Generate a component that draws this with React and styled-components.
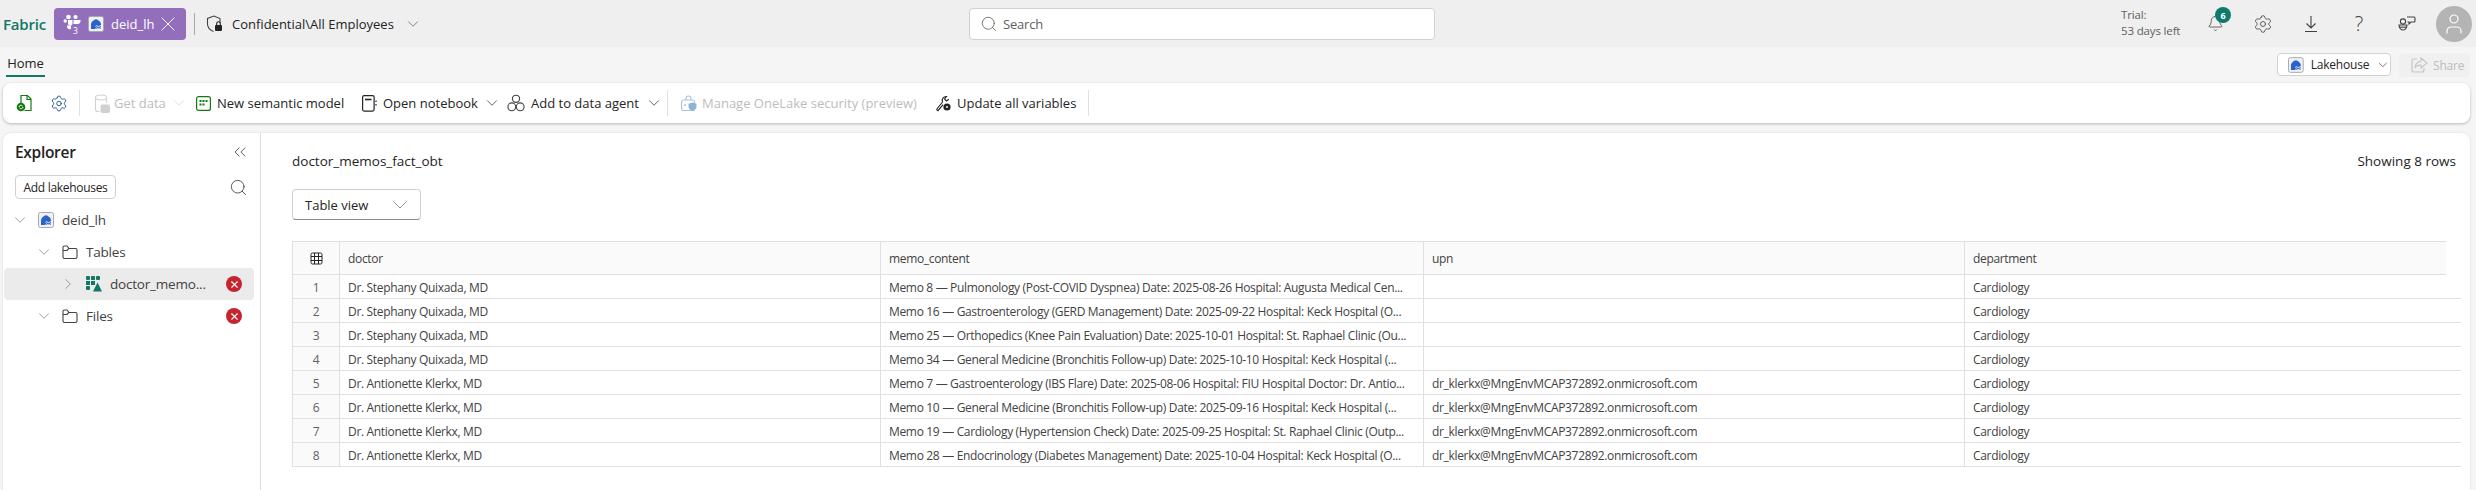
import React from 'react'
import styled, { createGlobalStyle } from 'styled-components'
import { ChevronDown, ChevronRight, ChevronsLeft, X, Search, Settings, User, Bell } from 'lucide-react'

const GlobalStyle = createGlobalStyle`
    html, body {
        margin: 0;
        padding: 0;
        background: #f5f5f5;
        overflow: hidden;
    }
    body {
        font-family: "Open Sans", "Noto Sans", "Liberation Sans", sans-serif;
        color: #242424;
    }
`

const Page = styled.div`
    width: 2476px;
    height: 490px;
    display: flex;
    flex-direction: column;
    overflow: hidden;
`

const TopBar = styled.header`
    height: 47px;
    flex: none;
    background: #efefef;
    display: grid;
    grid-template-columns: 969px 466px 1fr;
    align-items: center;
`

const TopLeft = styled.div`
    display: flex;
    align-items: center;
    padding-left: 3px;
`

const Brand = styled.span`
    font-size: 15px;
    font-weight: 600;
    letter-spacing: -0.2px;
    color: #117865;
    width: 51px;
`

const Chip = styled.div`
    width: 132px;
    height: 32px;
    box-sizing: border-box;
    padding-left: 9px;
    background: #936fbb;
    border-radius: 4px;
    display: flex;
    align-items: center;
    color: #fff;
    font-size: 13px;
`

const ChipLabel = styled.span`
    width: 43px;
    margin: 0 2px 0 7px;
    white-space: nowrap;
`

const ChipTile = styled.span`
    display: flex;
    margin-left: 7px;
`

const Rule = styled.div`
    width: 1px;
    height: ${(p) => p.$height || 22}px;
    background: ${(p) => p.$color || '#a8a8a8'};
    flex: none;
    margin: ${(p) => p.$margin || '0'};
`

const SensitivityText = styled.span`
    width: 165px;
    font-size: 13px;
    margin: 0 7px 0 9px;
    white-space: nowrap;
`

const SearchBox = styled.div`
    height: 32px;
    box-sizing: border-box;
    background: #fff;
    border: 1px solid #d1d1d1;
    border-radius: 4px;
    display: flex;
    align-items: center;
    padding-left: 10px;
    gap: 5px;
    font-size: 13px;
    letter-spacing: -0.2px;
    color: #616161;
`

const TopRight = styled.div`
    display: flex;
    align-items: center;
    justify-content: flex-end;
    padding-right: 4px;
    height: 47px;
`

const Trial = styled.div`
    width: 70px;
    font-size: 11.5px;
    line-height: 16px;
    letter-spacing: -0.15px;
    color: #616161;
    white-space: nowrap;
    margin-bottom: 1px;
`

const TopIcon = styled.div`
    position: relative;
    width: 48px;
    height: 47px;
    display: flex;
    align-items: center;
    justify-content: center;
    color: #424242;
`

const HelpGlyph = styled.span`
    font-size: 20px;
    font-weight: 300;
    line-height: 1;
`

const Badge = styled.span`
    position: absolute;
    left: 24px;
    top: 7px;
    width: 16px;
    height: 16px;
    border-radius: 50%;
    background: #0f7b6c;
    color: #fff;
    font-size: 9px;
    font-weight: 700;
    display: flex;
    align-items: center;
    justify-content: center;
`

const Avatar = styled.div`
    width: 36px;
    height: 36px;
    border-radius: 50%;
    background: #b4b4b4;
    color: #fff;
    display: flex;
    align-items: center;
    justify-content: center;
    margin-left: 5px;
`

const TabRow = styled.div`
    height: 36px;
    box-sizing: border-box;
    flex: none;
    display: flex;
    align-items: flex-start;
    justify-content: space-between;
    padding: 6px 6px 0 6px;
`

const Tab = styled.div`
    width: 39px;
    height: 24px;
    box-sizing: border-box;
    border-bottom: 2px solid #117865;
    font-size: 13px;
    font-weight: 500;
    text-align: center;
    line-height: 20px;
`

const TabActions = styled.div`
    display: flex;
    gap: 8px;
`

const LakehouseButton = styled.div`
    width: 114px;
    height: 23px;
    box-sizing: border-box;
    background: #fff;
    border: 1px solid #d1d1d1;
    border-radius: 4px;
    display: flex;
    align-items: center;
    padding-left: 10px;
    gap: 7px;
    font-size: 12px;
    letter-spacing: -0.2px;
`

const ShareButton = styled.div`
    width: 71px;
    height: 24px;
    box-sizing: border-box;
    background: #f0f0f0;
    border-radius: 4px;
    display: flex;
    align-items: center;
    padding-left: 12px;
    gap: 5px;
    font-size: 12px;
    letter-spacing: -0.2px;
    color: #bdbdbd;
`

const Toolbar = styled.div`
    height: 40px;
    flex: none;
    margin: 0 6px 0 3px;
    background: #fff;
    border-radius: 8px;
    box-shadow: 0 1px 3px rgba(0, 0, 0, 0.25);
    display: flex;
    align-items: center;
    padding-left: 13px;
    font-size: 13px;
`

const ToolIcon = styled.div`
    display: flex;
    width: ${(p) => p.$width || 18}px;
    flex: none;
    align-items: center;
    justify-content: center;
    margin-right: ${(p) => p.$gap ?? 5}px;
`

const ToolLabel = styled.span`
    flex: none;
    width: ${(p) => p.$width}px;
    color: ${(p) => (p.$disabled ? '#bdbdbd' : '#242424')};
    white-space: nowrap;
    margin-right: ${(p) => p.$gap ?? 0}px;
`

const Caret = styled(ChevronDown)`
    flex: none;
    margin-right: ${(p) => p.$gap ?? 0}px;
`

const Body = styled.div`
    flex: 1;
    display: flex;
    margin: 10px 6px 0 3px;
    min-height: 0;
`

const Explorer = styled.aside`
    width: 257px;
    flex: none;
    background: #fff;
    border-radius: 8px 0 0 0;
    border-right: 1px solid #e8e8e8;
    box-shadow: 0 0 2px rgba(0, 0, 0, 0.15);
    padding-top: 8px;
`

const ExplorerHead = styled.div`
    display: flex;
    justify-content: space-between;
    align-items: center;
    padding: 0 10px 0 12px;
    height: 22px;
`

const ExplorerTitle = styled.h2`
    margin: 0;
    font-size: 15.5px;
    font-weight: 600;
    letter-spacing: -0.3px;
`

const ExplorerTools = styled.div`
    display: flex;
    justify-content: space-between;
    align-items: center;
    padding: 0 12px;
    margin: 12px 0 5px;
`

const AddButton = styled.div`
    width: 101px;
    height: 24px;
    box-sizing: border-box;
    border: 1px solid #d1d1d1;
    border-radius: 4px;
    font-size: 12px;
    letter-spacing: -0.3px;
    display: flex;
    align-items: center;
    justify-content: center;
`

const TreeRow = styled.div`
    height: 32px;
    margin-right: 6px;
    margin-left: 1px;
    padding-left: ${(p) => p.$indent}px;
    display: flex;
    align-items: center;
    border-radius: 4px;
    background: ${(p) => (p.$selected ? '#ebebeb' : 'transparent')};
    font-size: 13.5px;
    letter-spacing: -0.2px;
    color: #424242;
    position: relative;
`

const TreeChevron = styled.div`
    width: 18px;
    display: flex;
    color: #8a8a8a;
    margin-right: 9px;
    flex: none;
`

const TreeLabel = styled.span`
    margin-left: 8px;
`

const ErrorDot = styled.span`
    position: absolute;
    left: 222px;
    top: 8px;
    width: 16px;
    height: 16px;
    border-radius: 50%;
    background: #c4262e;
    color: #fff;
    display: flex;
    align-items: center;
    justify-content: center;
`

const Main = styled.main`
    flex: 1;
    background: #fff;
    border-radius: 0 8px 0 0;
    box-shadow: 0 0 2px rgba(0, 0, 0, 0.15);
    padding: 0 9px 0 31px;
    min-width: 0;
`

const MainHead = styled.div`
    display: flex;
    justify-content: space-between;
    align-items: center;
    height: 56px;
    font-size: 13.5px;
    font-weight: 500;
    padding-right: 5px;
    box-sizing: border-box;
`

const ViewSelect = styled.div`
    width: 129px;
    height: 31px;
    box-sizing: border-box;
    border: 1px solid #d1d1d1;
    border-bottom-color: #8a8a8a;
    border-radius: 4px;
    display: flex;
    align-items: center;
    justify-content: space-between;
    padding: 0 8px 0 12px;
    font-size: 13px;
`

const Grid = styled.div`
    margin-top: 21px;
    width: 2169px;
    font-size: 12px;
    letter-spacing: -0.33px;
    color: #424242;
`

const Row = styled.div`
    display: grid;
    grid-template-columns: 48px 541px 543px 541px 1fr;
    height: ${(p) => (p.$head ? 34 : 24)}px;
    width: ${(p) => (p.$head ? '2154px' : '2169px')};
    border-bottom: 1px solid #e0e0e0;
    border-top: ${(p) => (p.$head ? '1px solid #e0e0e0' : 'none')};
    box-sizing: border-box;
    background: ${(p) => (p.$head ? '#fafafa' : '#fff')};

    > * {
        padding-top: ${(p) => (p.$head ? 0 : 2)}px;
    }
`

const Cell = styled.div`
    display: flex;
    align-items: center;
    padding-left: 8px;
    border-right: 1px solid #e0e0e0;
    white-space: nowrap;
    overflow: hidden;
    &:last-child {
        border-right: none;
    }
`

const IndexCell = styled(Cell)`
    justify-content: center;
    padding-left: 0;
    background: #fafafa;
    border-left: 1px solid #e0e0e0;
    color: #616161;
`

const TeamsIcon = () => (
    <svg width="18" height="22" viewBox="0 0 18 22" fill="#fff">
        <circle cx="5.5" cy="4" r="2.3" />
        <circle cx="12.5" cy="4" r="2.1" />
        <circle cx="2.2" cy="8" r="1.7" />
        <path d="M5 7h4.5v3.5a2.2 2.2 0 0 1-4.5 0z" />
        <path d="M10.5 7h7v1a3 3 0 0 1-3 3h-4z" />
        <path d="M4 12.5h4v3.5a3 3 0 0 1-4-2z" />
        <text x="10" y="20.5" fontSize="8.5" fontFamily="Open Sans">3</text>
    </svg>
)

const LakehouseIcon = ({ size = 16 }) => (
    <svg width={size} height={size} viewBox="0 0 16 16">
        <rect x="0.5" y="0.5" width="15" height="15" rx="2" fill="#eef1f7" stroke="#a8a8a8" />
        <path d="M3 13V8.2C3 6 6 3.5 8 3.2 10 3.5 13 6 13 8.2V13z" fill="#2a62c9" />
        <path d="M7.5 10.2q1 -1 2 0t2 0 2 0M7.5 12.4q1 -1 2 0t2 0 2 0" fill="none" stroke="#fff" strokeWidth="1" />
    </svg>
)

const ShieldLockIcon = () => (
    <svg width="17" height="18" viewBox="0 0 17 18" fill="none">
        <path d="M14 8V3.5L8 1 1.5 3.5V9c0 3.5 2.5 6 6 7.5" stroke="#424242" strokeWidth="1.1" />
        <rect x="9" y="10" width="7" height="6" rx="1" fill="#242424" />
        <path d="M10.7 10V8.6a1.8 1.8 0 0 1 3.6 0V10" stroke="#242424" strokeWidth="1.1" />
    </svg>
)

const DownloadIcon = () => (
    <svg width="14" height="18" viewBox="0 0 14 18" fill="none" stroke="#424242" strokeWidth="1.1">
        <path d="M7 1v12M2.5 8.5 7 13l4.5-4.5M1 16.5h12" />
    </svg>
)

const FolderIcon = () => (
    <svg width="16" height="16" viewBox="0 0 16 16" fill="none" stroke="#424242" strokeWidth="1.1">
        <path d="M1 3.5A1.5 1.5 0 0 1 2.5 2H5l2 2.5h6.5A1.5 1.5 0 0 1 15 6v7a1.5 1.5 0 0 1-1.5 1.5h-11A1.5 1.5 0 0 1 1 13z" />
        <path d="M7 4.5 5 6.5H1" />
    </svg>
)

const DeltaTableIcon = () => (
    <svg width="16" height="16" viewBox="0 0 16 16" fill="#117865">
        <rect x="0" y="0" width="4" height="4" rx="1" />
        <rect x="5" y="0" width="4" height="4" rx="0.5" />
        <rect x="10" y="0" width="4" height="4" rx="1" />
        <rect x="0" y="5" width="4" height="4" />
        <rect x="5" y="5" width="4" height="4" />
        <rect x="0" y="10" width="4" height="4" rx="1" />
        <path d="M11.5 6.5 16 15.5H7z" />
    </svg>
)

const GridIcon = () => (
    <svg width="13" height="13" viewBox="0 0 13 13" fill="none" stroke="#242424" strokeWidth="1">
        <rect x="1" y="1" width="11" height="11" rx="1.5" />
        <path d="M4.5 1v11M8.5 1v11M1 4.5h11M1 8.5h11" />
    </svg>
)

const RunIcon = () => (
    <svg width="18" height="18" viewBox="0 0 18 18" fill="none">
        <path d="M5 9V1.5h6.5l3.5 3.5v11.5H8.5" stroke="#107c10" strokeWidth="1.2" />
        <path d="M11 1.5V5.5h4" stroke="#107c10" strokeWidth="1.2" />
        <circle cx="5" cy="13" r="4.3" fill="#107c10" />
        <path d="M3 13a2 2 0 0 1 3.5-1M7 13a2 2 0 0 1-3.5 1" stroke="#fff" strokeWidth="1" />
    </svg>
)

const GetDataIcon = () => (
    <svg width="16" height="19" viewBox="0 0 16 19" fill="none" stroke="#d1d1d1" strokeWidth="1.1">
        <ellipse cx="7" cy="3.5" rx="5.5" ry="2.5" />
        <path d="M1.5 3.5v12c0 1 1 2 3 2h1M12.5 3.5v5" />
        <rect x="7" y="11" width="8.5" height="7.5" rx="1.5" fill="#d1d1d1" />
    </svg>
)

const ModelIcon = () => (
    <svg width="15" height="15" viewBox="0 0 15 15" fill="none">
        <rect x="0.6" y="0.6" width="13.8" height="13.8" rx="2" stroke="#107c10" strokeWidth="1.2" />
        <g fill="#107c10">
            <rect x="3.5" y="4" width="2" height="2" />
            <rect x="6.5" y="4" width="2" height="2" />
            <rect x="9.5" y="4" width="2" height="2" />
            <rect x="3.5" y="7.5" width="2" height="2" />
            <rect x="6.5" y="7.5" width="2" height="2" />
        </g>
    </svg>
)

const NotebookIcon = () => (
    <svg width="15" height="17" viewBox="0 0 15 17" fill="none" stroke="#242424" strokeWidth="1.2">
        <rect x="0.6" y="0.6" width="11.5" height="15.5" rx="1.5" />
        <path d="M3 4.5h6.5" strokeWidth="1.6" />
        <path d="M14 5.5v1.5M14 9v1.5" />
    </svg>
)

const AgentIcon = () => (
    <svg width="18" height="18" viewBox="0 0 18 18" fill="none" stroke="#424242" strokeWidth="1.1">
        <circle cx="9" cy="4.8" r="3.6" />
        <circle cx="4.8" cy="12.8" r="3.9" />
        <circle cx="13.2" cy="12.8" r="3.9" />
    </svg>
)

const LockShieldIcon = () => (
    <svg width="16" height="17" viewBox="0 0 16 17" fill="none">
        <path d="M5 5V3.5a2.5 2.5 0 0 1 5 0V5" stroke="#a9c4de" strokeWidth="1.1" />
        <rect x="0.6" y="5" width="13" height="10.5" rx="2" stroke="#a9c4de" strokeWidth="1.1" />
        <circle cx="4" cy="10" r="1" fill="#a9c4de" />
        <path d="M11.5 7.5l4 1.2v3c0 2-2 3.5-4 4.3-2-.8-4-2.3-4-4.3v-3z" fill="#8fb3d6" />
    </svg>
)

const VariablesIcon = () => (
    <svg width="17" height="18" viewBox="0 0 17 18" fill="none">
        <path d="M1.5 15.5 7.5 8a4 4 0 0 1 4-5.5l-2 2.5 2 2 2.3-1.7" stroke="#242424" strokeWidth="1.1" />
        <path d="M1.5 15.5l1.5 1.2 5-6" stroke="#242424" strokeWidth="1.1" />
        <circle cx="12" cy="13" r="3.6" fill="#242424" />
        <circle cx="12" cy="13" r="1" fill="#fff" />
    </svg>
)

const ShareIcon = () => (
    <svg width="17" height="16" viewBox="0 0 17 16" fill="none" stroke="#c4c4c4" strokeWidth="1.1">
        <path d="M6 2H3a2 2 0 0 0-2 2v9a2 2 0 0 0 2 2h8a2 2 0 0 0 2-2v-2" />
        <path d="M10 1l6 5-6 5V8C7 8 5 9 4 11c0-4 2-6 6-7z" />
    </svg>
)

const FeedbackIcon = () => (
    <svg width="18" height="18" viewBox="0 0 18 18" fill="none" stroke="#424242" strokeWidth="1.1">
        <circle cx="5" cy="6.5" r="2.6" />
        <path d="M1 10h8c0 3-2 5-4 5s-4-2-4-5z" />
        <path d="M1 12.2h8" />
        <path d="M9 2h7a1 1 0 0 1 1 1v3a1 1 0 0 1-1 1h-3l-2 2V7H9.5" />
    </svg>
)

const rows = [
    ['Dr. Stephany Quixada, MD', 'Memo 8 — Pulmonology (Post-COVID Dyspnea) Date: 2025-08-26 Hospital: Augusta Medical Cen...', ''],
    ['Dr. Stephany Quixada, MD', 'Memo 16 — Gastroenterology (GERD Management) Date: 2025-09-22 Hospital: Keck Hospital (O...', ''],
    ['Dr. Stephany Quixada, MD', 'Memo 25 — Orthopedics (Knee Pain Evaluation) Date: 2025-10-01 Hospital: St. Raphael Clinic (Ou...', ''],
    ['Dr. Stephany Quixada, MD', 'Memo 34 — General Medicine (Bronchitis Follow-up) Date: 2025-10-10 Hospital: Keck Hospital (...', ''],
    ['Dr. Antionette Klerkx, MD', 'Memo 7 — Gastroenterology (IBS Flare) Date: 2025-08-06 Hospital: FIU Hospital Doctor: Dr. Antio...', 'dr_klerkx@MngEnvMCAP372892.onmicrosoft.com'],
    ['Dr. Antionette Klerkx, MD', 'Memo 10 — General Medicine (Bronchitis Follow-up) Date: 2025-09-16 Hospital: Keck Hospital (...', 'dr_klerkx@MngEnvMCAP372892.onmicrosoft.com'],
    ['Dr. Antionette Klerkx, MD', 'Memo 19 — Cardiology (Hypertension Check) Date: 2025-09-25 Hospital: St. Raphael Clinic (Outp...', 'dr_klerkx@MngEnvMCAP372892.onmicrosoft.com'],
    ['Dr. Antionette Klerkx, MD', 'Memo 28 — Endocrinology (Diabetes Management) Date: 2025-10-04 Hospital: Keck Hospital (O...', 'dr_klerkx@MngEnvMCAP372892.onmicrosoft.com'],
]

const App = () => {
    return (
        <Page>
            <GlobalStyle />
            <TopBar>
                <TopLeft>
                    <Brand>Fabric</Brand>
                    <Chip>
                        <TeamsIcon />
                        <ChipTile><LakehouseIcon /></ChipTile>
                        <ChipLabel>deid_lh</ChipLabel>
                        <X size={24} strokeWidth={0.9} />
                    </Chip>
                    <Rule $margin="0 11px 0 8px" />
                    <ShieldLockIcon />
                    <SensitivityText>Confidential\All Employees</SensitivityText>
                    <ChevronDown size={18} strokeWidth={1} color="#616161" />
                </TopLeft>
                <SearchBox>
                    <Search size={18} strokeWidth={1.1} />
                    Search
                </SearchBox>
                <TopRight>
                    <Trial>Trial:<br />53 days left</Trial>
                    <TopIcon>
                        <Bell size={17} strokeWidth={1.1} />
                        <Badge>6</Badge>
                    </TopIcon>
                    <TopIcon><Settings size={20} strokeWidth={1} /></TopIcon>
                    <TopIcon><DownloadIcon /></TopIcon>
                    <TopIcon><HelpGlyph>?</HelpGlyph></TopIcon>
                    <TopIcon><FeedbackIcon /></TopIcon>
                    <Avatar><User size={24} strokeWidth={1.2} /></Avatar>
                </TopRight>
            </TopBar>
            <TabRow>
                <Tab>Home</Tab>
                <TabActions>
                    <LakehouseButton>
                        <LakehouseIcon />
                        Lakehouse
                        <ChevronDown size={14} strokeWidth={1.1} />
                    </LakehouseButton>
                    <ShareButton>
                        <ShareIcon />
                        Share
                    </ShareButton>
                </TabActions>
            </TabRow>
            <Toolbar>
                <ToolIcon $gap={16}><RunIcon /></ToolIcon>
                <ToolIcon $gap={11}><Settings size={21} strokeWidth={1.2} color="#17527f" /></ToolIcon>
                <Rule $height={26} $color="#e0e0e0" $margin="0 14px 0 0" />
                <ToolIcon $gap={4} $width={16}><GetDataIcon /></ToolIcon>
                <ToolLabel $disabled $width={52} $gap={4}>Get data</ToolLabel>
                <Caret size={18} strokeWidth={1} color="#d1d1d1" $gap={8} />
                <ToolIcon $gap={6} $width={15}><ModelIcon /></ToolIcon>
                <ToolLabel $width={129} $gap={16}>New semantic model</ToolLabel>
                <ToolIcon $gap={6} $width={15}><NotebookIcon /></ToolIcon>
                <ToolLabel $width={97} $gap={3}>Open notebook</ToolLabel>
                <Caret size={18} strokeWidth={1.1} color="#424242" $gap={6} />
                <ToolIcon $gap={6}><AgentIcon /></ToolIcon>
                <ToolLabel $width={112} $gap={2}>Add to data agent</ToolLabel>
                <Caret size={18} strokeWidth={1.1} color="#424242" $gap={4} />
                <Rule $height={26} $color="#e0e0e0" $margin="0 13px 0 0" />
                <ToolIcon $gap={5} $width={16}><LockShieldIcon /></ToolIcon>
                <ToolLabel $disabled $width={219} $gap={14}>Manage OneLake security (preview)</ToolLabel>
                <ToolIcon $gap={5} $width={17}><VariablesIcon /></ToolIcon>
                <ToolLabel $width={121} $gap={10}>Update all variables</ToolLabel>
                <Rule $height={26} $color="#e0e0e0" />
            </Toolbar>
            <Body>
                <Explorer>
                    <ExplorerHead>
                        <ExplorerTitle>Explorer</ExplorerTitle>
                        <ChevronsLeft size={20} strokeWidth={1} color="#424242" />
                    </ExplorerHead>
                    <ExplorerTools>
                        <AddButton>Add lakehouses</AddButton>
                        <Search size={19} strokeWidth={1.1} color="#424242" />
                    </ExplorerTools>
                    <TreeRow $indent={7}>
                        <TreeChevron><ChevronDown size={18} strokeWidth={1.1} /></TreeChevron>
                        <LakehouseIcon />
                        <TreeLabel>deid_lh</TreeLabel>
                    </TreeRow>
                    <TreeRow $indent={31}>
                        <TreeChevron><ChevronDown size={18} strokeWidth={1.1} /></TreeChevron>
                        <FolderIcon />
                        <TreeLabel>Tables</TreeLabel>
                    </TreeRow>
                    <TreeRow $indent={55} $selected>
                        <TreeChevron><ChevronRight size={18} strokeWidth={1.1} /></TreeChevron>
                        <DeltaTableIcon />
                        <TreeLabel>doctor_memo...</TreeLabel>
                        <ErrorDot><X size={11} strokeWidth={2.4} /></ErrorDot>
                    </TreeRow>
                    <TreeRow $indent={31}>
                        <TreeChevron><ChevronDown size={18} strokeWidth={1.1} /></TreeChevron>
                        <FolderIcon />
                        <TreeLabel>Files</TreeLabel>
                        <ErrorDot><X size={11} strokeWidth={2.4} /></ErrorDot>
                    </TreeRow>
                </Explorer>
                <Main>
                    <MainHead>
                        <span>doctor_memos_fact_obt</span>
                        <span>Showing 8 rows</span>
                    </MainHead>
                    <ViewSelect>
                        Table view
                        <ChevronDown size={24} strokeWidth={0.7} color="#616161" />
                    </ViewSelect>
                    <Grid>
                        <Row $head>
                            <IndexCell><GridIcon /></IndexCell>
                            <Cell>doctor</Cell>
                            <Cell>memo_content</Cell>
                            <Cell>upn</Cell>
                            <Cell>department</Cell>
                        </Row>
                        {rows.map((row, i) => (
                            <Row key={i}>
                                <IndexCell>{i + 1}</IndexCell>
                                <Cell>{row[0]}</Cell>
                                <Cell>{row[1]}</Cell>
                                <Cell>{row[2]}</Cell>
                                <Cell>Cardiology</Cell>
                            </Row>
                        ))}
                    </Grid>
                </Main>
            </Body>
        </Page>
    )
}

export default App
